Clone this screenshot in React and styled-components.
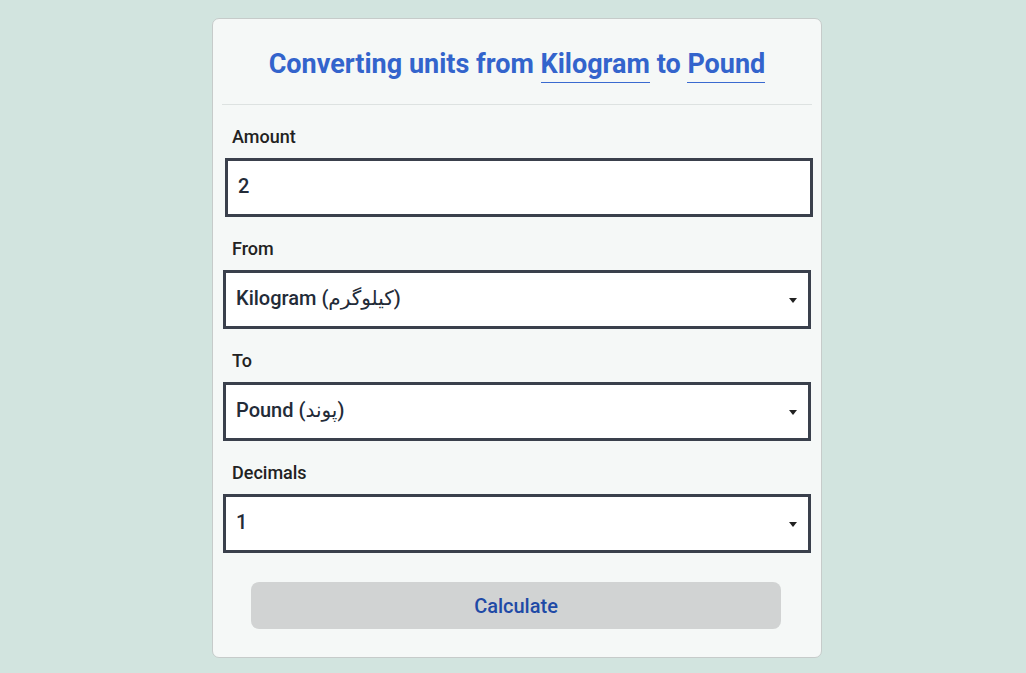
import React, { useState } from 'react';
import styled, { createGlobalStyle } from 'styled-components';

const GlobalStyle = createGlobalStyle`
  * { box-sizing: border-box; }
  body {
    margin: 0;
    background: #d2e4df;
    font-family: Roboto, "DejaVu Sans", "Noto Sans", sans-serif;
  }
`;

const units = [
  { value: 'kg', label: 'Kilogram (کیلوگرم)' },
  { value: 'lb', label: 'Pound (پوند)' },
  { value: 'g', label: 'Gram (گرم)' },
  { value: 'oz', label: 'Ounce (اونس)' },
];

function App() {
  const [amount, setAmount] = useState('2');
  const [from, setFrom] = useState('kg');
  const [to, setTo] = useState('lb');
  const [decimals, setDecimals] = useState('1');

  return (
    <>
      <GlobalStyle />
      <Page>
        <Card>
          <Title>
            Converting units from <UnitName>Kilogram</UnitName> to{' '}
            <UnitName>Pound</UnitName>
          </Title>
          <Form onSubmit={(e) => e.preventDefault()}>
            <Field>
              <Label>Amount</Label>
              <AmountInput value={amount} onChange={(e) => setAmount(e.target.value)} />
            </Field>
            <Field>
              <Label>From</Label>
              <SelectWrap>
                <Select value={from} onChange={(e) => setFrom(e.target.value)}>
                  {units.map((u) => (
                    <option key={u.value} value={u.value}>{u.label}</option>
                  ))}
                </Select>
              </SelectWrap>
            </Field>
            <Field>
              <Label>To</Label>
              <SelectWrap>
                <Select value={to} onChange={(e) => setTo(e.target.value)}>
                  {units.map((u) => (
                    <option key={u.value} value={u.value}>{u.label}</option>
                  ))}
                </Select>
              </SelectWrap>
            </Field>
            <Field>
              <Label>Decimals</Label>
              <SelectWrap>
                <Select value={decimals} onChange={(e) => setDecimals(e.target.value)}>
                  {['0', '1', '2', '3', '4'].map((d) => (
                    <option key={d} value={d}>{d}</option>
                  ))}
                </Select>
              </SelectWrap>
            </Field>
            <ButtonRow>
              <CalcButton type="submit">Calculate</CalcButton>
            </ButtonRow>
          </Form>
        </Card>
      </Page>
    </>
  );
}
export default App;

const Page = styled.div`
  display: flex;
  justify-content: center;
  padding: 18px 0 0 8px;
`;

const Card = styled.div`
  width: 610px;
  background: #f5f8f7;
  border: 1px solid #c6cbca;
  border-radius: 7px;
  padding: 0 9px 28px;
`;

const Title = styled.h1`
  margin: 0;
  height: 86px;
  padding-top: 27px;
  border-bottom: 1px solid #dde2e1;
  text-align: center;
  font-size: 27px;
  line-height: 36px;
  font-weight: 700;
  color: #3364cc;
  white-space: nowrap;
`;

const UnitName = styled.span`
  border-bottom: 1px solid #3a6ad0;
  padding-bottom: 2px;
`;

const Form = styled.form`
  display: flex;
  flex-direction: column;
  gap: 21px;
  padding: 21px 2px 0 1px;
`;

const Field = styled.div`
  display: flex;
  flex-direction: column;
  gap: 10px;
`;

const Label = styled.label`
  padding-left: 9px;
  font-size: 18px;
  line-height: 22px;
  font-weight: 500;
  color: #222;
`;

const AmountInput = styled.input`
  width: 588px;
  height: 59px;
  margin-left: 2px;
  padding: 0 10px 3px;
  border: 3px solid #3a404c;
  border-radius: 0;
  background: #fff;
  font-family: inherit;
  font-size: 20px;
  font-weight: 500;
  color: #232b38;
  outline: none;
`;

const SelectWrap = styled.div`
  position: relative;
  width: 588px;
  &::after {
    content: '';
    position: absolute;
    right: 14px;
    top: 28px;
    border-left: 4.5px solid transparent;
    border-right: 4.5px solid transparent;
    border-top: 5px solid #222;
    pointer-events: none;
  }
`;

const Select = styled.select`
  width: 100%;
  height: 59px;
  padding: 0 30px 3px 10px;
  appearance: none;
  border: 3px solid #3a404c;
  border-radius: 0;
  background: #fff;
  font-family: inherit;
  font-size: 20px;
  font-weight: 500;
  color: #232b38;
  outline: none;
`;

const ButtonRow = styled.div`
  display: flex;
  justify-content: center;
  padding: 8px 29px 0 28px;
`;

const CalcButton = styled.button`
  width: 100%;
  height: 47px;
  border: none;
  border-radius: 8px;
  background: #d1d3d3;
  font-family: inherit;
  font-size: 20px;
  font-weight: 500;
  color: #1f4aa6;
  cursor: pointer;
`;
